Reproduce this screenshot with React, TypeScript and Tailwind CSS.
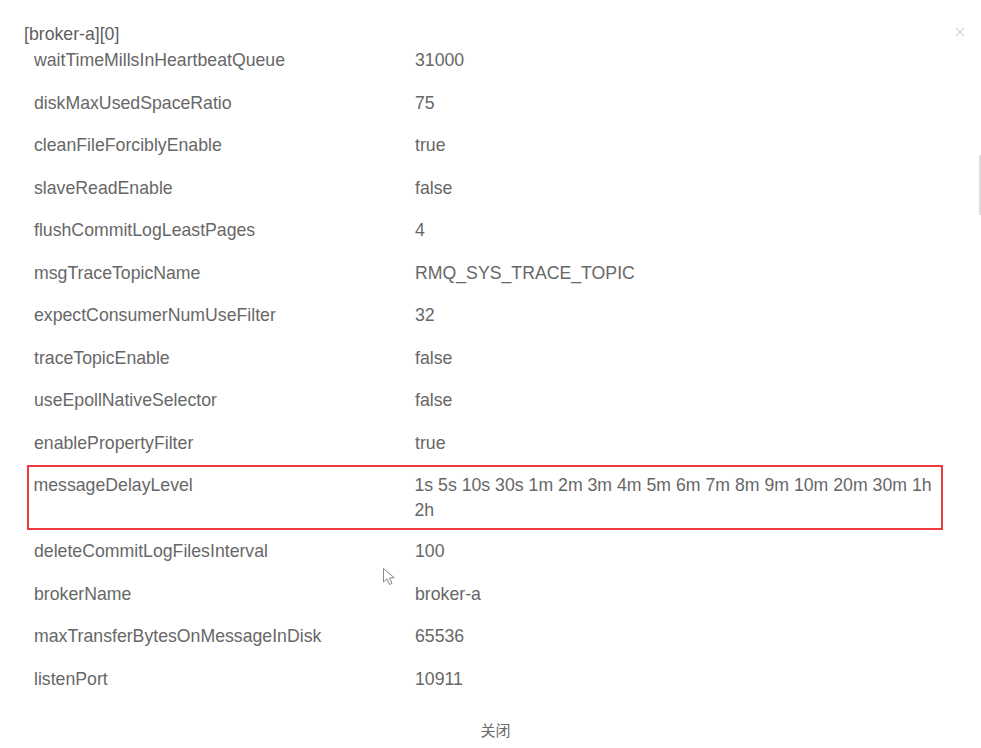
import React from "react";

const rows: [string, string][] = [
  ["waitTimeMillsInHeartbeatQueue", "31000"],
  ["diskMaxUsedSpaceRatio", "75"],
  ["cleanFileForciblyEnable", "true"],
  ["slaveReadEnable", "false"],
  ["flushCommitLogLeastPages", "4"],
  ["msgTraceTopicName", "RMQ_SYS_TRACE_TOPIC"],
  ["expectConsumerNumUseFilter", "32"],
  ["traceTopicEnable", "false"],
  ["useEpollNativeSelector", "false"],
  ["enablePropertyFilter", "true"],
  ["messageDelayLevel", "1s 5s 10s 30s 1m 2m 3m 4m 5m 6m 7m 8m 9m 10m 20m 30m 1h 2h"],
  ["deleteCommitLogFilesInterval", "100"],
  ["brokerName", "broker-a"],
  ["maxTransferBytesOnMessageInDisk", "65536"],
  ["listenPort", "10911"],
];

export default function App() {
  return (
    <div
      className="relative w-[981px] h-[748px] bg-white overflow-hidden text-[#676767]"
      style={{ fontFamily: '"Liberation Sans", Arial, sans-serif' }}
    >
      <div className="pl-[24px] pt-[27.5px] h-[39.5px] text-[17.7px] leading-[12px] text-[#5e5e5e]">
        [broker-a][0]
      </div>
      <div className="ml-[27px] w-[916px] text-[17.7px] leading-[25px]">
        {rows.map(([k, v]) => {
          const hl = k === "messageDelayLevel";
          return (
            <div
              key={k}
              className={
                hl
                  ? "flex border-[2.5px] border-[#ee3b3e] pl-[4.5px] pt-[6.3px] pb-[5.5px]"
                  : "flex pl-[7px] py-[8.75px]"
              }
            >
              <div className="w-[381px] shrink-0">{k}</div>
              <div className="w-[524px]">{v}</div>
            </div>
          );
        })}
      </div>
      <div
        className="mt-[21px] text-center text-[15px] leading-[20px] text-[#6a6a6a] pl-[10px]"
        style={{ fontFamily: '"Liberation Sans", "Noto Sans CJK SC", sans-serif' }}
      >
        关闭
      </div>

      {/* close icon */}
      <svg className="absolute left-[955px] top-[27px]" width="10" height="10" viewBox="0 0 10 10">
        <path d="M1 1L9 9M9 1L1 9" stroke="#d9d9d9" strokeWidth="1.2" />
      </svg>
      {/* scrollbar */}
      <div className="absolute left-[979px] top-[155px] w-[2px] h-[60px] bg-[#dcdcdc]" />
      {/* mouse cursor */}
      <svg className="absolute left-[382px] top-[567px]" width="16" height="20" viewBox="0 0 16 20">
        <path
          d="M1.5 1.5L1.5 15L5 11.8L7.6 17.5L10 16.4L7.5 10.8L12.3 10.8Z"
          fill="white"
          stroke="#8a8a8a"
          strokeWidth="1"
          strokeLinejoin="round"
        />
      </svg>
    </div>
  );
}
